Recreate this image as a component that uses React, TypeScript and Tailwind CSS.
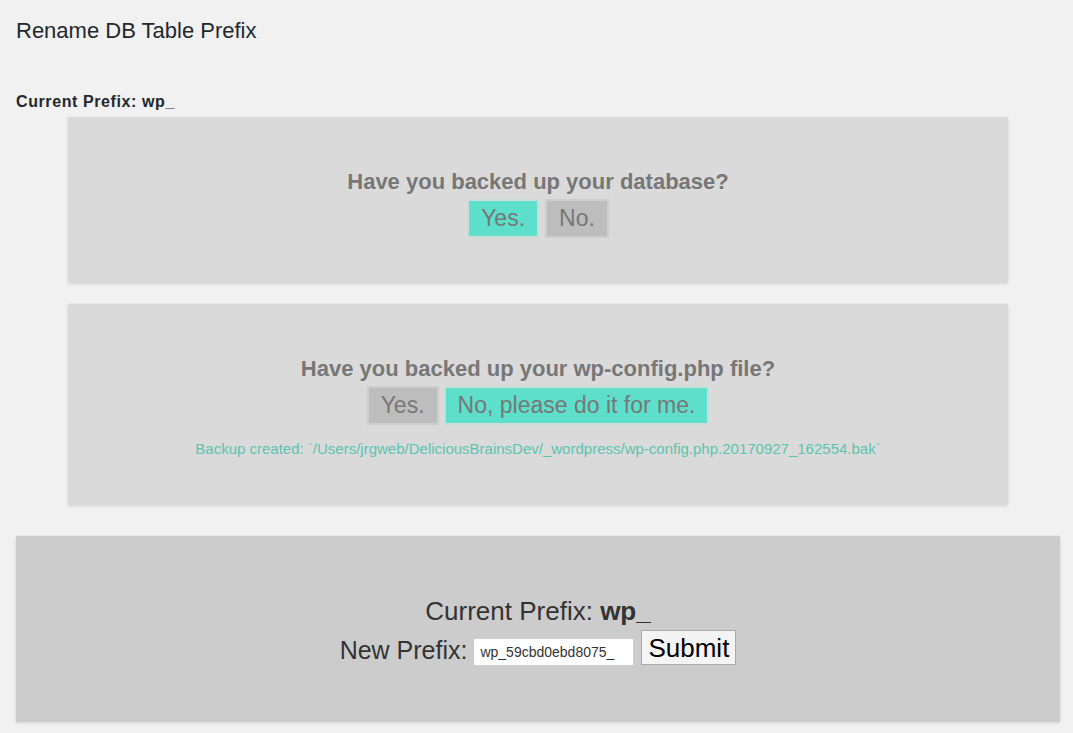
import React from "react";

export default function App() {
  const font = { fontFamily: '"Liberation Sans", Arial, sans-serif' };
  return (
    <div className="min-h-[733px] w-full bg-[#f1f1f1] px-4 text-[#23282d]" style={font}>
      <h1 className="pt-[16px] text-[22px] leading-[29px] font-normal text-[#23282d]">Rename DB Table Prefix</h1>
      <p className="mt-[47px] text-[16px] leading-[19px] font-bold tracking-[0.6px] text-[#23282d]">Current Prefix: wp_</p>

      <div className="w-[1044px]">
        <div className="mx-auto mt-[6px] w-[940px] bg-[#dadada] pt-[50px] pb-[45px] text-center shadow-[0_1px_3px_rgba(0,0,0,0.12)]">
          <div className="text-[22px] leading-[29px] font-bold text-[#777]">Have you backed up your database?</div>
          <div className="mt-[3px] flex justify-center gap-[6px]">
            <button className="h-[39px] border-2 border-[#c9dcd7] bg-[#5ddfcb] px-[12px] text-[23px] text-[#777]">Yes.</button>
            <button className="h-[39px] border-2 border-[#cdcdcd] bg-[#bdbdbd] px-[12px] text-[23px] text-[#777]">No.</button>
          </div>
        </div>

        <div className="mx-auto mt-[21px] w-[940px] bg-[#dadada] pt-[50px] pb-[46px] text-center shadow-[0_1px_3px_rgba(0,0,0,0.12)]">
          <div className="text-[22px] leading-[29px] font-bold text-[#777]">Have you backed up your wp-config.php file?</div>
          <div className="mt-[3px] flex justify-center gap-[5px]">
            <button className="h-[39px] border-2 border-[#cdcdcd] bg-[#bdbdbd] px-[12px] text-[23px] text-[#777]">Yes.</button>
            <button className="h-[39px] border-2 border-[#c9dcd7] bg-[#5ddfcb] px-[12px] text-[23px] text-[#777]">No, please do it for me.</button>
          </div>
          <div className="mt-[14px] text-[15px] leading-[20px] text-[#5cc4b0]">
            Backup created: `/Users/jrgweb/DeliciousBrainsDev/_wordpress/wp-config.php.20170927_162554.bak`
          </div>
        </div>

        <div className="mt-[31px] w-[1044px] bg-[#cccccc] pt-[59px] pb-[57px] text-center shadow-[0_1px_3px_rgba(0,0,0,0.12)]">
          <div className="text-[26px] leading-[32px] text-[#333]">
            Current Prefix: <span className="font-bold">wp_</span>
          </div>
          <div className="mt-[3px] flex items-center justify-center text-[25px] leading-[30px] text-[#333]">
            <span className="mt-[4px]">New Prefix:</span>
            <input
              readOnly
              value="wp_59cbd0ebd8075_"
              className="mt-[8px] ml-[7px] h-[26px] w-[159px] bg-white px-[6px] text-[14px] text-[#333] outline-none"
              style={font}
            />
            <button className="ml-[8px] h-[35px] border border-[#aaa] bg-[#f4f4f4] px-[6px] text-[26px] leading-[30px] text-black">Submit</button>
          </div>
        </div>
      </div>
    </div>
  );
}
